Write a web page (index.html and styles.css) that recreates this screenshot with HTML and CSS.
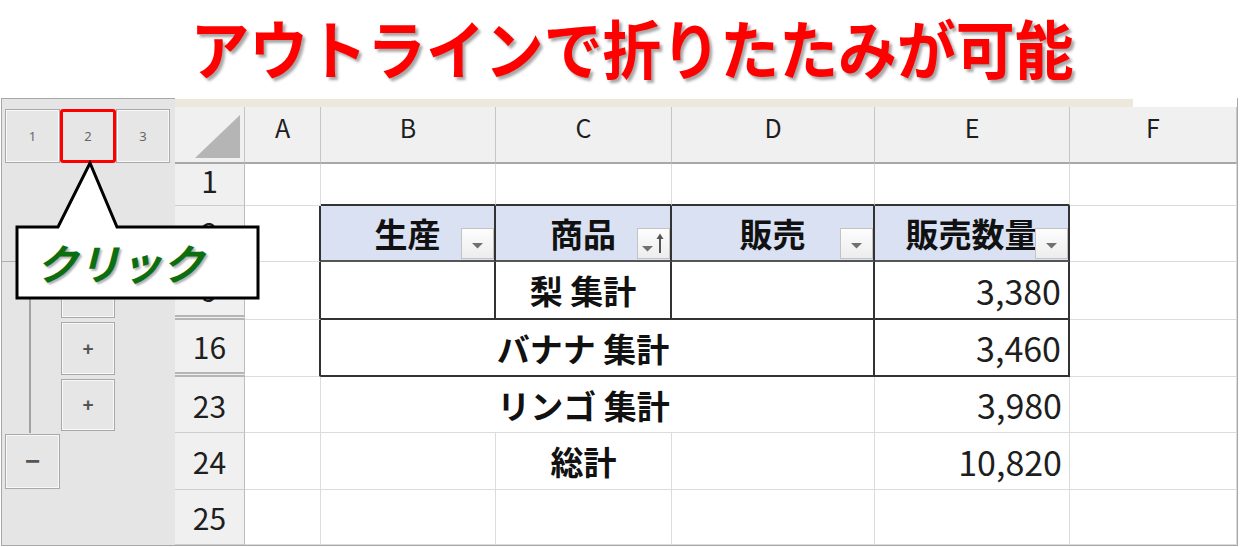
FILE: index.html
```html
<!DOCTYPE html>
<html lang="ja">
<head>
<meta charset="utf-8">
<title>アウトライン</title>
<link rel="stylesheet" href="styles.css">
</head>
<body>
<div class="page">
  <header class="title"><h1 class="title-text">アウトラインで折りたたみが可能</h1></header>

  <div class="sheet">
    <div class="outline">
      <div class="lv lv1">1</div>
      <div class="lv lv2 sel">2</div>
      <div class="lv lv3">3</div>
      <div class="oline-h"></div>
      <div class="bracket"></div>
      <div class="ob r9">+</div>
      <div class="ob r16">+</div>
      <div class="ob r23">+</div>
      <div class="ob r24">−</div>
    </div>

    <div class="strip"></div>

    <div class="corner"><svg class="corner-tri" width="45" height="43" viewBox="0 0 45 43"><polygon points="45,0 45,43 0,43" fill="#b5b5b5"/></svg></div>
    <div class="ch">A</div>
    <div class="ch">B</div>
    <div class="ch">C</div>
    <div class="ch">D</div>
    <div class="ch">E</div>
    <div class="ch">F</div>

    <div class="rh first">1</div>
    <div class="c"></div>
    <div class="c tt"></div>
    <div class="c tt"></div>
    <div class="c tt"></div>
    <div class="c tt"></div>
    <div class="c"></div>

    <div class="rh hid">2</div>
    <div class="c tl"></div>
    <div class="c hd">生産<span class="dd"><svg width="31" height="29" viewBox="0 0 31 29"><polygon points="10,14 21,14 15.5,19.5" fill="#707070"/></svg></span></div>
    <div class="c hd">商品<span class="dd"><svg width="31" height="29" viewBox="0 0 31 29"><polygon points="4,17 15,17 9.5,22.5" fill="#707070"/><line x1="22" y1="9" x2="22" y2="24" stroke="#555" stroke-width="2"/><polygon points="18.5,10 22,4.5 25.5,10" fill="#555"/></svg></span></div>
    <div class="c hd">販売<span class="dd"><svg width="31" height="29" viewBox="0 0 31 29"><polygon points="10,14 21,14 15.5,19.5" fill="#707070"/></svg></span></div>
    <div class="c hd">販売数量<span class="dd"><svg width="31" height="29" viewBox="0 0 31 29"><polygon points="10,14 21,14 15.5,19.5" fill="#707070"/></svg></span></div>
    <div class="c"></div>

    <div class="rh hid">9</div>
    <div class="c tl"></div>
    <div class="c bx"></div>
    <div class="c bx lbl">梨 集計</div>
    <div class="c bx"></div>
    <div class="c bx num">3,380</div>
    <div class="c"></div>

    <div class="rh hid">16</div>
    <div class="c tl"></div>
    <div class="c bx lbl span3">バナナ 集計</div>
    <div class="c bx num">3,460</div>
    <div class="c"></div>

    <div class="rh">23</div>
    <div class="c"></div>
    <div class="c lbl span3">リンゴ 集計</div>
    <div class="c num">3,980</div>
    <div class="c"></div>

    <div class="rh">24</div>
    <div class="c"></div>
    <div class="c"></div>
    <div class="c lbl">総計</div>
    <div class="c"></div>
    <div class="c num">10,820</div>
    <div class="c"></div>

    <div class="rh">25</div>
    <div class="c"></div>
    <div class="c"></div>
    <div class="c"></div>
    <div class="c"></div>
    <div class="c"></div>
    <div class="c"></div>
  </div>

  <div class="callout">
    <svg class="callout-shape" width="245" height="140" viewBox="0 0 245 140"><polygon points="2,67 43,67 75,3 102,67 243,67 243,138 2,138" fill="#fff" stroke="#000" stroke-width="3"/></svg>
    <div class="callout-text">クリック</div>
  </div>
</div>
</body>
</html>
```

FILE: styles.css
```css
* { box-sizing: border-box; }

body {
  margin: 0;
  background: #fff;
  font-family: "Noto Sans CJK JP", "Noto Sans", sans-serif;
  color: #1e1e1e;
}

.page {
  position: relative;
  width: 1240px;
  height: 547px;
  overflow: hidden;
}

.title {
  height: 98px;
  display: flex;
  align-items: center;
  justify-content: center;
  padding-left: 24px;
  padding-bottom: 6px;
}

.title-text {
  margin: 0;
  font-size: 64px;
  font-weight: 700;
  line-height: 1;
  color: #ff0000;
  transform: scaleX(0.92);
  text-shadow: 3px 3px 3px rgba(0, 0, 0, 0.35);
  white-space: nowrap;
}

.sheet {
  display: grid;
  width: max-content;
  margin-left: 1px;
  border-left: 1px solid #a8a8a8;
  border-right: 1px solid #a8a8a8;
  border-bottom: 1px solid #a8a8a8;
  grid-template-columns: 173px 70px 76px 175px 176px 203px 195px 167px;
  grid-template-rows: 9px 57px 42px 56px 58px 57px 56px 57px 55px;
}

/* outline (grouping) area */
.outline {
  grid-row: 1 / -1;
  grid-column: 1;
  display: grid;
  grid-template-columns: 3px 55px 56px 54px 1fr;
  grid-template-rows: 8px 57px 42px 56px 58px 57px 56px 57px 55px;
  background: #e5e5e5;
  border-top: 1px solid #a8a8a8;
}

.lv {
  grid-row: 2;
  margin: 2px 0 1px;
  display: flex;
  align-items: center;
  justify-content: center;
  background: #e6e6e6;
  border: 1px solid #a9a9a9;
  box-shadow: inset 0 0 0 1px #f8f8f8;
  font-family: "Noto Sans", sans-serif;
  font-size: 13px;
  color: #666;
}
.lv1 { grid-column: 2; }
.lv2 { grid-column: 3; }
.lv3 { grid-column: 4; }
.lv.sel {
  border: 3px solid #ff0000;
  border-radius: 3px;
  box-shadow: none;
}

.oline-h {
  grid-row: 4;
  grid-column: 1 / -1;
  border-bottom: 1px solid #b0b0b0;
}

.bracket {
  grid-row: 5 / 8;
  grid-column: 2;
  width: 2px;
  margin-left: 24px;
  background: #a2a2a2;
}

.ob {
  margin: 2px 1px 2px 1px;
  display: flex;
  align-items: center;
  justify-content: center;
  background: #e6e6e6;
  border: 1px solid #a9a9a9;
  box-shadow: inset 0 0 0 1px #f8f8f8;
  font-family: "Liberation Sans", sans-serif;
  font-weight: 700;
  font-size: 19px;
  color: #555;
}
.r9 { grid-row: 5; grid-column: 3; }
.r16 { grid-row: 6; grid-column: 3; }
.r23 { grid-row: 7; grid-column: 3; }
.r24 { grid-row: 8; grid-column: 2; margin: 1px 0 1px 0; font-size: 26px; }

/* top strip */
.strip {
  grid-row: 1;
  grid-column: 2 / -1;
  background: linear-gradient(to right, #ece9dc 958px, #fff 958px);
  border-top: 1px solid #fff;
}

/* headers */
.corner {
  display: flex;
  align-items: flex-end;
  justify-content: flex-end;
  padding: 0 4px 4px 0;
  background: #f0f0f0;
  border-right: 1px solid #c6c6c6;
  border-bottom: 2px solid #a8a8a8;
}
.corner-tri { display: block; }

.ch {
  display: flex;
  align-items: center;
  justify-content: center;
  padding-bottom: 15px;
  background: #f0f0f0;
  border-right: 1px solid #c6c6c6;
  border-bottom: 2px solid #a8a8a8;
  font-size: 25px;
  color: #1e1e1e;
}

.rh {
  display: flex;
  align-items: center;
  justify-content: center;
  background: #f0f0f0;
  border-right: 1px solid #bdbdbd;
  border-bottom: 1px solid #cdcdcd;
  font-size: 30px;
  color: #1e1e1e;
}
.rh.first { padding-bottom: 10px; }
.rh.hid { border-bottom: 5px double #b5b5b5; }

/* cells */
.c {
  display: flex;
  align-items: center;
  border-right: 1px solid #dcdcdc;
  border-bottom: 1px solid #dcdcdc;
}
.c.tt { border-bottom: 2px solid #333; }
.c.tl { border-right: 2px solid #333; }
.c.bx {
  border-right: 2px solid #333;
  border-bottom: 2px solid #333;
}

.c.hd {
  position: relative;
  justify-content: center;
  background: #d9e1f2;
  border-right: 2px solid #333;
  border-bottom: 2px solid #555;
  font-size: 33px;
  font-weight: 700;
  color: #111;
}

.dd {
  position: absolute;
  right: 0;
  bottom: 1px;
  width: 33px;
  height: 31px;
  border: 1px solid #c3c3c3;
  background: linear-gradient(#fdfdfd, #ededed);
}
.dd svg { display: block; }

.lbl {
  justify-content: center;
  font-size: 33px;
  font-weight: 700;
  color: #111;
  white-space: nowrap;
}
.span3 {
  grid-column: span 3;
  padding-right: 28px;
}

.num {
  justify-content: flex-end;
  padding-right: 7px;
  font-size: 34px;
  color: #1e1e1e;
}

/* callout */
.callout {
  position: absolute;
  left: 15px;
  top: 160px;
  width: 245px;
  height: 140px;
}
.callout-shape {
  position: absolute;
  left: 0;
  top: 0;
}
.callout-text {
  position: absolute;
  left: 2px;
  top: 67px;
  width: 241px;
  height: 71px;
  display: flex;
  align-items: center;
  padding-left: 19px;
  padding-bottom: 2px;
  font-size: 42px;
  font-weight: 700;
  font-style: italic;
  color: #0b6e11;
  text-shadow: 2px 2px 2px rgba(0, 0, 0, 0.3);
  white-space: nowrap;
}
```
